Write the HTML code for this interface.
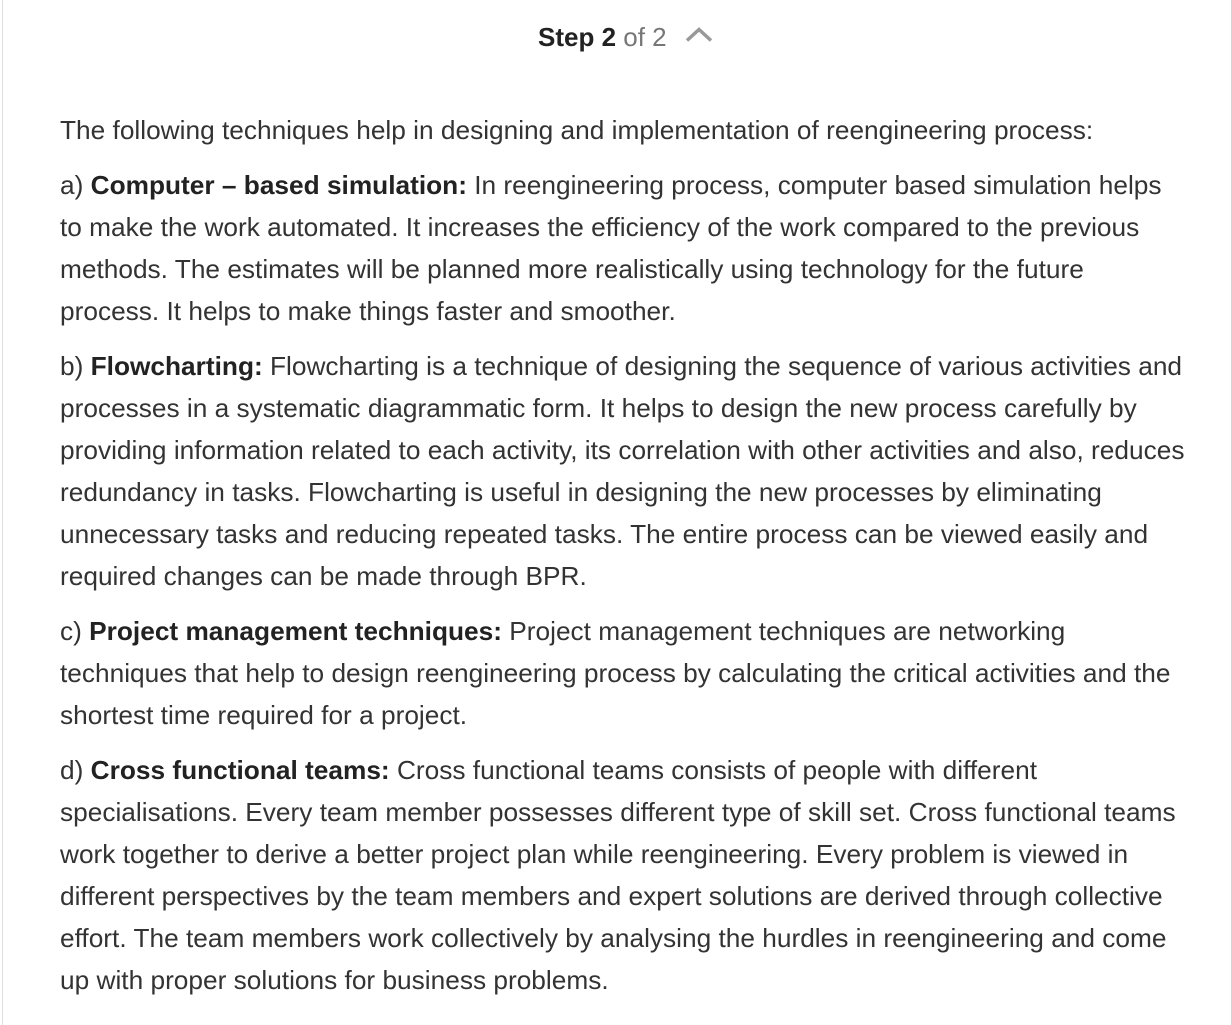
<!DOCTYPE html>
<html><head><meta charset="utf-8"><style>
html,body{margin:0;padding:0;background:#fff;}
body{width:1231px;height:1025px;overflow:hidden;position:relative;font-family:"Liberation Sans",Arial,sans-serif;color:#333;}
.bl{position:absolute;left:2px;top:0;width:1px;height:1025px;background:#e0e0e0;}
.hdr{position:absolute;top:21px;left:538px;font-size:26px;line-height:32px;white-space:nowrap;}
.hdr b{color:#222;}
.hdr span{color:#777;}
.chev{position:absolute;left:685px;top:27px;}
.c{position:absolute;left:60px;top:109px;font-size:26.25px;line-height:42px;white-space:nowrap;}
.c p{margin:0 0 13px 0;}
.c b{color:#222;}
</style></head><body>
<div class="bl"></div>
<div class="hdr"><b>Step 2</b> <span>of 2</span></div>
<svg class="chev" width="28" height="16" viewBox="0 0 28 16"><path d="M2 13.5 L14 2.5 L26 13.5" fill="none" stroke="#999" stroke-width="3.5"/></svg>
<div class="c">
<p>The following techniques help in designing and implementation of reengineering process:</p>
<p>a) <b>Computer – based simulation:</b> In reengineering process, computer based simulation helps<br>to make the work automated. It increases the efficiency of the work compared to the previous<br>methods. The estimates will be planned more realistically using technology for the future<br>process. It helps to make things faster and smoother.</p>
<p>b) <b>Flowcharting:</b> Flowcharting is a technique of designing the sequence of various activities and<br>processes in a systematic diagrammatic form. It helps to design the new process carefully by<br>providing information related to each activity, its correlation with other activities and also, reduces<br>redundancy in tasks. Flowcharting is useful in designing the new processes by eliminating<br>unnecessary tasks and reducing repeated tasks. The entire process can be viewed easily and<br>required changes can be made through BPR.</p>
<p>c) <b>Project management techniques:</b> Project management techniques are networking<br>techniques that help to design reengineering process by calculating the critical activities and the<br>shortest time required for a project.</p>
<p>d) <b>Cross functional teams:</b> Cross functional teams consists of people with different<br>specialisations. Every team member possesses different type of skill set. Cross functional teams<br>work together to derive a better project plan while reengineering. Every problem is viewed in<br>different perspectives by the team members and expert solutions are derived through collective<br>effort. The team members work collectively by analysing the hurdles in reengineering and come<br>up with proper solutions for business problems.</p>
</div>
</body></html>
